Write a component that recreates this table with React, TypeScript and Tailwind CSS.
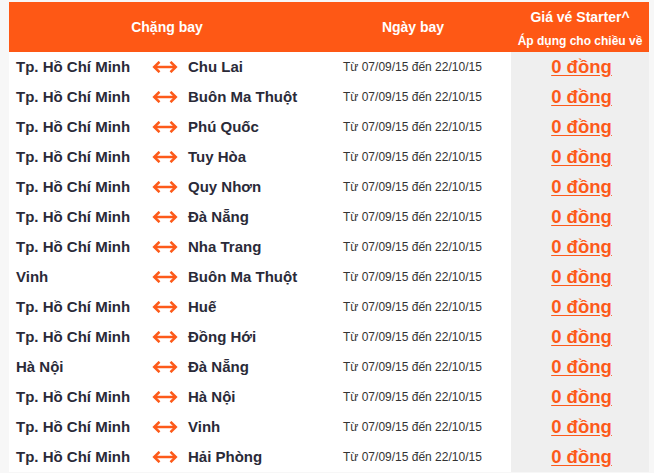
import React from "react";

const rows: [string, string][] = [
  ["Tp. Hồ Chí Minh", "Chu Lai"],
  ["Tp. Hồ Chí Minh", "Buôn Ma Thuột"],
  ["Tp. Hồ Chí Minh", "Phú Quốc"],
  ["Tp. Hồ Chí Minh", "Tuy Hòa"],
  ["Tp. Hồ Chí Minh", "Quy Nhơn"],
  ["Tp. Hồ Chí Minh", "Đà Nẵng"],
  ["Tp. Hồ Chí Minh", "Nha Trang"],
  ["Vinh", "Buôn Ma Thuột"],
  ["Tp. Hồ Chí Minh", "Huế"],
  ["Tp. Hồ Chí Minh", "Đồng Hới"],
  ["Hà Nội", "Đà Nẵng"],
  ["Tp. Hồ Chí Minh", "Hà Nội"],
  ["Tp. Hồ Chí Minh", "Vinh"],
  ["Tp. Hồ Chí Minh", "Hải Phòng"],
];

function Arrow() {
  return (
    <svg width="26" height="12" viewBox="0 0 26 12" fill="none" stroke="#fd5a1a" strokeWidth="2.5" strokeLinecap="butt" strokeLinejoin="miter">
      <path d="M2 6 H24" />
      <path d="M7.5 0.8 L2.2 6 L7.5 11.2" />
      <path d="M18.5 0.8 L23.8 6 L18.5 11.2" />
    </svg>
  );
}

export default function App() {
  return (
    <div
      className="w-[654px] h-[473px] overflow-hidden bg-[#f7f7f7] pl-[9px] pr-[5px] pt-[2px]"
      style={{ fontFamily: '"Liberation Sans", Arial, sans-serif' }}
    >
      <div className="w-[640px] bg-white">
        <div className="flex h-[50px] bg-[#fe5815] text-white font-bold">
          <div className="w-[316px] flex items-center justify-center text-[14px]">Chặng bay</div>
          <div className="w-[186px] flex items-center justify-center pr-[10px] text-[14px]">Ngày bay</div>
          <div className="w-[138px] flex flex-col items-center pt-[2px]">
            <div className="h-[27px] flex items-center text-[14px]">Giá vé Starter^</div>
            <div className="h-[22px] flex items-center text-[12px]">Áp dụng cho chiều về</div>
          </div>
        </div>
        {rows.map(([from, to], i) => (
          <div key={i} className="flex h-[30px] items-center">
            <div className="w-[137px] pl-[7px] text-[15px] font-bold text-[#2a2a38]">{from}</div>
            <div className="w-[41px] pl-[6px] flex items-center">
              <Arrow />
            </div>
            <div className="w-[149px] pl-[1px] text-[15px] font-bold text-[#2a2a38]">{to}</div>
            <div className="w-[175px] pl-[7px] text-[12px] text-[#333]">Từ 07/09/15 đến 22/10/15</div>
            <div className="w-[138px] h-[30px] bg-[#efefef] flex items-center justify-center pl-[3px]">
              <a className="text-[18.5px] font-bold text-[#fd5a1a] underline underline-offset-2">0 đồng</a>
            </div>
          </div>
        ))}
      </div>
    </div>
  );
}
